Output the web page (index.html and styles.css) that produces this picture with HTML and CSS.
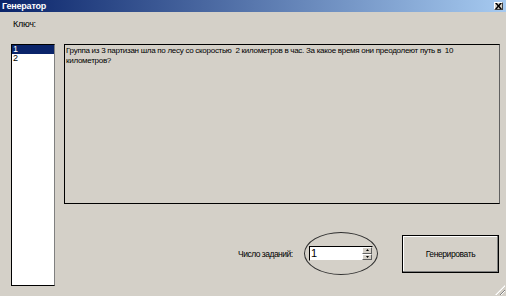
FILE: index.html
```html
<!DOCTYPE html>
<html lang="ru">
<head>
    <meta charset="UTF-8">
    <title>Генератор</title>
    <link rel="stylesheet" href="styles.css">
</head>
<body>
    <div class="window">
        <div class="titlebar">
            <span class="title">Генератор</span>
            <span class="close-btn">
                <svg width="7" height="6" viewBox="0 0 7 6"><path d="M0 0h2l1.5 2 1.5-2h2l-2.5 3 2.5 3h-2l-1.5-2-1.5 2h-2l2.5-3z" fill="#000"/></svg>
            </span>
        </div>
        <div class="content">
            <div class="key-label">Ключ:</div>
            <div class="main">
                <ul class="listbox">
                    <li class="selected">1</li>
                    <li>2</li>
                </ul>
                <div class="right">
                    <div class="task-text">Группа из 3 партизан шла по лесу со скоростью&nbsp; 2 километров в час. За какое время они преодолеют путь в&nbsp; 10 километров?</div>
                    <div class="bottom-row">
                        <span class="count-label">Число заданий:</span>
                        <div class="ring">
                            <div class="spinner">
                                <span class="spin-value">1</span>
                                <div class="spin-btns">
                                    <span class="spin-btn"><svg width="3" height="2" viewBox="0 0 3 2"><path d="M1.5 0L3 2H0z" fill="#000"/></svg></span>
                                    <span class="spin-btn"><svg width="3" height="2" viewBox="0 0 3 2"><path d="M0 0h3L1.5 2z" fill="#000"/></svg></span>
                                </div>
                            </div>
                        </div>
                        <button class="gen-btn">Генерировать</button>
                    </div>
                </div>
            </div>
        </div>
        <div class="grip"></div>
    </div>
</body>
</html>
```

FILE: styles.css
```css
* {
    margin: 0;
    padding: 0;
    box-sizing: border-box;
}

body {
    font-family: 'Liberation Sans', Arial, sans-serif;
    font-size: 8.5px;
    color: #000;
    background: #d4d0c8;
}

.window {
    width: 506px;
    height: 296px;
    background: #d4d0c8;
    display: flex;
    flex-direction: column;
    position: relative;
    overflow: hidden;
}

.titlebar {
    height: 12px;
    background: linear-gradient(90deg, #0a246a 0%, #a6caf0 100%);
    display: flex;
    align-items: center;
    justify-content: space-between;
    padding: 0 3px 0 2px;
}

.title {
    color: #fff;
    font-weight: bold;
    font-size: 9px;
    letter-spacing: -0.2px;
}

.close-btn {
    width: 9px;
    height: 8px;
    background: #d4d0c8;
    border: 1px solid;
    border-color: #fff #404040 #404040 #fff;
    display: flex;
    align-items: center;
    justify-content: center;
}

.content {
    padding: 7px 7px 0 11px;
    flex: 1;
}

.key-label {
    margin-left: 2px;
    height: 25px;
    line-height: 10px;
    font-size: 9px;
    letter-spacing: -0.3px;
}

.main {
    display: grid;
    grid-template-columns: 44px 436px;
    column-gap: 9px;
}

.listbox {
    list-style: none;
    height: 242px;
    background: #fff;
    border: 1px solid #000;
    border-right-color: #808080;
    line-height: 9px;
    font-size: 9px;
}

.listbox li {
    height: 9px;
    padding-left: 1px;
}

.listbox li.selected {
    background: #0a246a;
    color: #fff;
}

.task-text {
    height: 160px;
    border: 1px solid #000;
    border-right-color: #606060;
    padding: 1px 1px;
    font-size: 8px;
    line-height: 10px;
    letter-spacing: -0.28px;
}

.bottom-row {
    display: flex;
    align-items: center;
    margin-top: 28px;
    height: 43px;
}

.count-label {
    margin-left: 174px;
    width: 66px;
    white-space: nowrap;
    letter-spacing: -0.5px;
}

.ring {
    width: 74px;
    height: 43px;
    border: 1px solid #303030;
    border-radius: 50%;
    display: flex;
    align-items: center;
    justify-content: center;
}

.spinner {
    width: 64px;
    height: 15px;
    background: #fff;
    border: 1px solid;
    border-color: #000 #d4d0c8 #d4d0c8 #000;
    display: flex;
    justify-content: space-between;
}

.spin-value {
    font-size: 11px;
    line-height: 13px;
    padding-left: 1px;
}

.spin-btns {
    width: 10px;
    display: flex;
    flex-direction: column;
}

.spin-btn {
    flex: 1;
    background: #d4d0c8;
    border: 1px solid;
    border-color: #fff #606060 #606060 #fff;
    display: flex;
    align-items: center;
    justify-content: center;
}

.gen-btn {
    margin-left: 24px;
    width: 97px;
    height: 38px;
    background: #d4d0c8;
    border: 1px solid #000;
    box-shadow: inset -1px -1px 0 #808080, inset 1px 1px 0 #fff;
    font-family: inherit;
    font-size: 8.5px;
    letter-spacing: -0.4px;
}

.grip {
    position: absolute;
    right: 1px;
    bottom: 1px;
    width: 10px;
    height: 10px;
    background: repeating-linear-gradient(135deg, transparent 0 2px, #808080 2px 3px, #fff 3px 4px);
    clip-path: polygon(100% 0, 100% 100%, 0 100%);
}
```
